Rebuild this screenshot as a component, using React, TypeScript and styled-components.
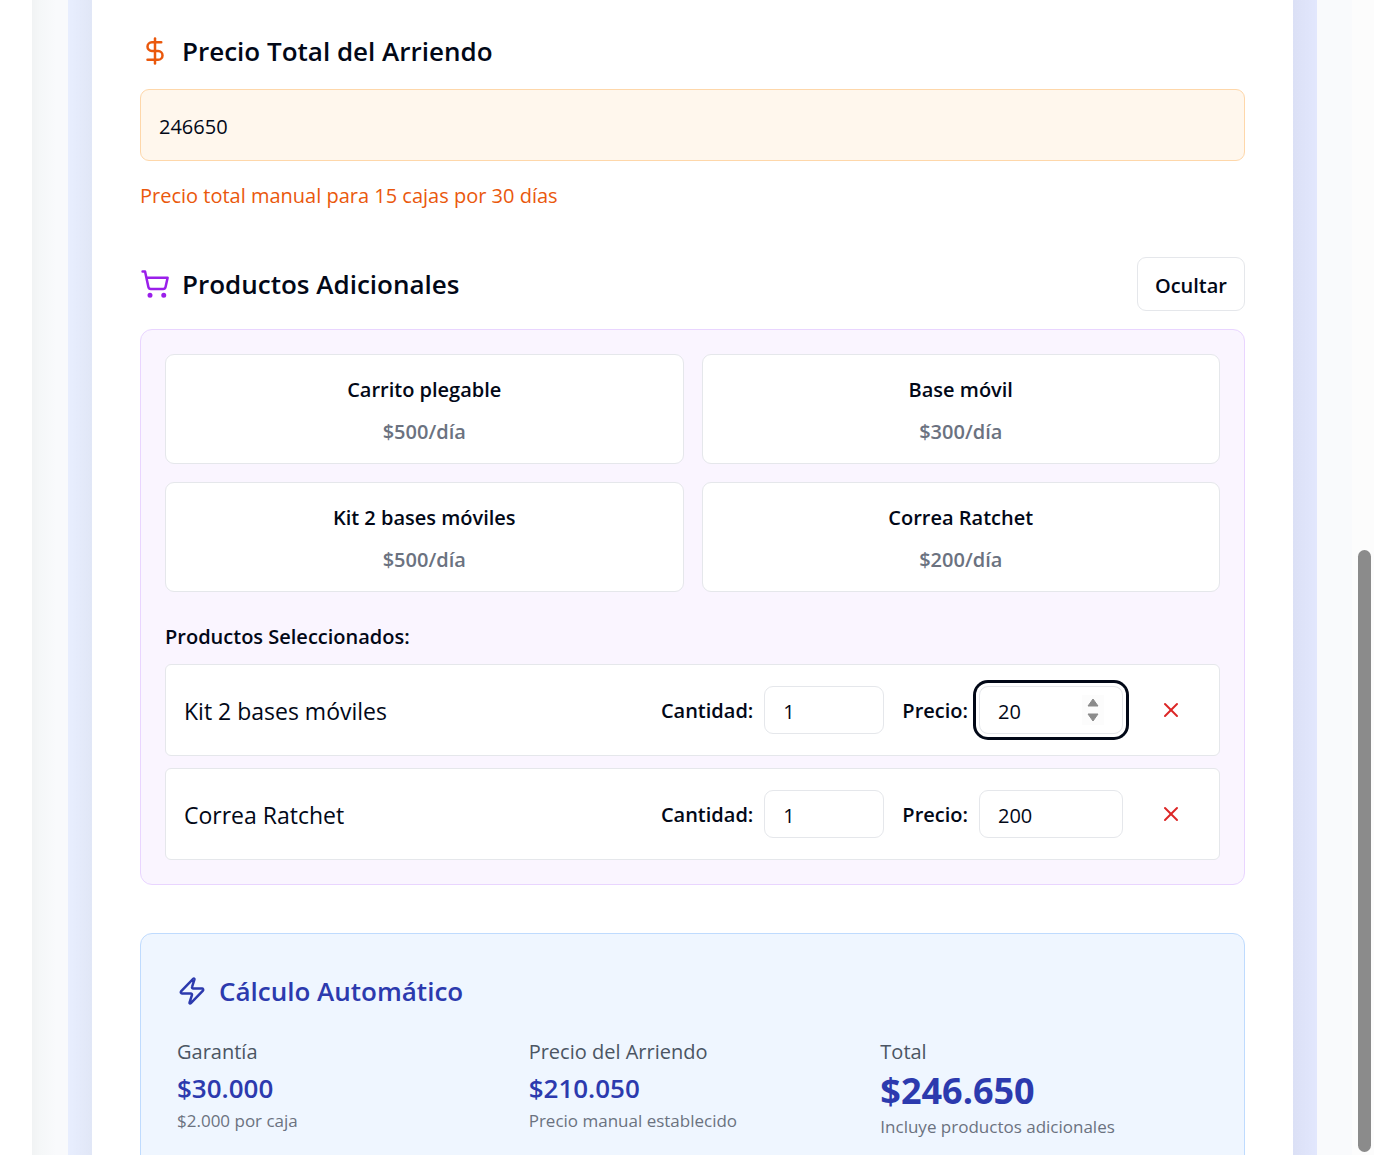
import React, { useState } from "react";
import styled, { createGlobalStyle } from "styled-components";
import { DollarSign, ShoppingCart, X, Zap } from "lucide-react";

const GlobalStyle = createGlobalStyle`
  *, *::before, *::after { box-sizing: border-box; }
  body {
    margin: 0;
    background: #ffffff;
    color: #020817;
    font-family: "Segoe UI", "Open Sans", "Noto Sans", sans-serif;
    font-size: 23px;
    line-height: 36px;
  }
  button, input { font: inherit; color: inherit; }
  h2, h3, p { margin: 0; }
`;

const Shell = styled.div`
  display: flex;
  height: 100vh;
  overflow: hidden;
`;

const Sidebar = styled.aside`
  flex: 0 0 32px;
  background: #ffffff;
`;

const Main = styled.main`
  flex: 1;
  min-width: 0;
  padding: 0 35px 0 36px;
  background: linear-gradient(to right, #f1f3f4 0, #f5f7f8 8px, #f9fafc 24px, #f9fafc 100%);
`;

const Backdrop = styled.div`
  min-height: 100%;
  padding: 0 24px;
  background:
    linear-gradient(to right, rgba(0, 0, 0, 0) 0, rgba(0, 0, 0, 0.03) 24px, rgba(0, 0, 0, 0.03) calc(100% - 24px), rgba(0, 0, 0, 0) 100%),
    linear-gradient(to right, #e8eefe, #e2e7fd);
`;

const Card = styled.div`
  display: flex;
  flex-direction: column;
  gap: 44px;
  padding: 30px 48px 48px;
  background: #ffffff;
`;

const Section = styled.section`
  display: flex;
  flex-direction: column;
`;

const HeaderRow = styled.div`
  display: flex;
  align-items: center;
  justify-content: space-between;
  margin-bottom: 18px;
`;

const Heading = styled.h2<{ $icon: string; $color?: string }>`
  display: flex;
  align-items: center;
  gap: 12px;
  font-size: 26px;
  line-height: 42px;
  font-weight: 600;
  color: ${(p) => p.$color ?? "#020817"};

  svg { flex: none; color: ${(p) => p.$icon}; }
`;

const PriceInput = styled.input`
  width: 100%;
  height: 72px;
  margin: 17px 0 18px;
  padding: 2px 18px 0;
  border: 1px solid #fed7aa;
  border-radius: 9px;
  background: #fff7ed;
  font-size: 20px;
`;

const Hint = styled.p`
  font-size: 20px;
  line-height: 34px;
  color: #ea580c;
`;

const OutlineButton = styled.button`
  height: 54px;
  padding: 3px 17px 0;
  border: 1px solid #e5e7eb;
  border-radius: 9px;
  background: #ffffff;
  font-size: 20px;
  font-weight: 600;
`;

const Panel = styled.div`
  padding: 24px;
  border: 1px solid #e9d5ff;
  border-radius: 12px;
  background: #faf5ff;
`;

const ProductGrid = styled.div`
  display: grid;
  grid-template-columns: 1fr 1fr;
  gap: 18px;
`;

const ProductButton = styled.button`
  display: flex;
  flex-direction: column;
  align-items: center;
  justify-content: center;
  gap: 12px;
  height: 110px;
  padding: 3px 18px 0;
  border: 1px solid #e5e7eb;
  border-radius: 9px;
  background: #ffffff;
  font-size: 20px;
  line-height: 30px;
  font-weight: 600;
`;

const Rate = styled.span`
  color: #6b7280;
`;

const Subheading = styled.h3`
  margin: 30px 0 12px;
  font-size: 20px;
  line-height: 30px;
  font-weight: 600;
`;

const Lines = styled.div`
  display: flex;
  flex-direction: column;
  gap: 12px;
`;

const Line = styled.div`
  display: flex;
  align-items: center;
  gap: 18px;
  height: 92px;
  padding: 0 18px;
  border: 1px solid #e5e7eb;
  border-radius: 6px;
  background: #ffffff;
`;

const LineName = styled.span`
  flex: 1;
  padding-top: 2px;
`;

const Field = styled.div`
  display: flex;
  align-items: center;
  gap: 11px;
`;

const FieldLabel = styled.label`
  padding-top: 2px;
  font-size: 20px;
  font-weight: 600;
`;

const NumberBox = styled.div<{ $width: number; $active?: boolean }>`
  display: flex;
  align-items: center;
  width: ${(p) => p.$width}px;
  height: 48px;
  padding: 0 18px;
  border: 1px solid #e5e7eb;
  border-radius: 9px;
  background: #ffffff;
  box-shadow: ${(p) => (p.$active ? "0 0 0 3px #ffffff, 0 0 0 6px #020817" : "none")};
`;

const NumberInput = styled.input`
  flex: 1;
  min-width: 0;
  height: 100%;
  padding: 2px 0 0;
  border: 0;
  outline: 0;
  background: transparent;
  font-size: 20px;
  appearance: textfield;

  &::-webkit-inner-spin-button, &::-webkit-outer-spin-button { appearance: none; margin: 0; }
`;

const Spinner = styled.div`
  display: flex;
  flex-direction: column;
  align-items: center;
  width: 22px;
  background: #fcfcfc;
`;

const Step = styled.button`
  display: flex;
  align-items: center;
  justify-content: center;
  width: 22px;
  height: 15px;
  padding: 0;
  border: 0;
  background: transparent;
`;

const RemoveButton = styled.button`
  display: flex;
  align-items: center;
  justify-content: center;
  width: 60px;
  height: 54px;
  padding: 0;
  border: 0;
  background: transparent;
  color: #dc2626;
`;

const Summary = styled.section`
  margin-top: 4px;
  padding: 36px;
  border: 1px solid #bfdbfe;
  border-radius: 12px;
  background: #eff6ff;
`;

const Totals = styled.div`
  display: grid;
  grid-template-columns: repeat(3, 1fr);
  gap: 24px;
  margin-top: 25px;
`;

const Muted = styled.p`
  font-size: 20px;
  line-height: 30px;
  color: #4b5563;
`;

const Amount = styled.p<{ $large?: boolean }>`
  font-size: ${(p) => (p.$large ? 36 : 26)}px;
  line-height: ${(p) => (p.$large ? 48 : 42)}px;
  font-weight: ${(p) => (p.$large ? 700 : 600)};
  color: #2c3aae;
`;

const Note = styled.p`
  font-size: 17px;
  line-height: 24px;
  color: #6b7280;
`;

const Scrollbar = styled.div`
  display: flex;
  flex: 0 0 22px;
  flex-direction: column;
  align-items: center;
  padding: 0 3px 3px 6px;
  background: #fcfcfc;

  &::before { content: ""; flex: 550; }
`;

const Thumb = styled.div`
  flex: 602;
  width: 13px;
  border-radius: 7px;
  background: #8b8b8b;
`;

const products = [
  { name: "Carrito plegable", rate: 500 },
  { name: "Base móvil", rate: 300 },
  { name: "Kit 2 bases móviles", rate: 500 },
  { name: "Correa Ratchet", rate: 200 },
];

const totals = [
  { label: "Garantía", amount: "$30.000", note: "$2.000 por caja" },
  { label: "Precio del Arriendo", amount: "$210.050", note: "Precio manual establecido" },
  { label: "Total", amount: "$246.650", note: "Incluye productos adicionales", large: true },
];

type LineProps = { id: string; name: string; initialPrice: number; active?: boolean };

function SelectedLine({ id, name, initialPrice, active }: LineProps) {
  const [quantity, setQuantity] = useState("1");
  const [price, setPrice] = useState(String(initialPrice));
  const step = (by: number) => setPrice(String(Number(price) + by));

  return (
    <Line>
      <LineName>{name}</LineName>
      <Field>
        <FieldLabel htmlFor={`${id}-qty`}>Cantidad:</FieldLabel>
        <NumberBox $width={120}>
          <NumberInput id={`${id}-qty`} type="number" value={quantity} onChange={(e) => setQuantity(e.target.value)} />
        </NumberBox>
      </Field>
      <Field>
        <FieldLabel htmlFor={`${id}-price`}>Precio:</FieldLabel>
        <NumberBox $width={144} $active={active}>
          <NumberInput id={`${id}-price`} type="number" value={price} onChange={(e) => setPrice(e.target.value)} />
          {active && (
            <Spinner>
              <Step aria-label="Aumentar" onClick={() => step(1)}>
                <svg width="12" height="9" viewBox="0 0 12 9"><path d="M6 1 11 8H1Z" fill="#8b8b8b" stroke="#8b8b8b" strokeLinejoin="round" /></svg>
              </Step>
              <Step aria-label="Disminuir" onClick={() => step(-1)}>
                <svg width="12" height="9" viewBox="0 0 12 9"><path d="M6 8 1 1H11Z" fill="#8b8b8b" stroke="#8b8b8b" strokeLinejoin="round" /></svg>
              </Step>
            </Spinner>
          )}
        </NumberBox>
      </Field>
      <RemoveButton aria-label={`Quitar ${name}`}><X size={24} /></RemoveButton>
    </Line>
  );
}

export default function App() {
  const [total, setTotal] = useState("246650");

  return (
    <>
      <GlobalStyle />
      <Shell>
        <Sidebar />
        <Main>
          <Backdrop>
            <Card>
              <Section>
                <Heading as="label" htmlFor="total" $icon="#ea580c">
                  <DollarSign size={30} />
                  Precio Total del Arriendo
                </Heading>
                <PriceInput id="total" value={total} onChange={(e) => setTotal(e.target.value)} />
                <Hint>Precio total manual para 15 cajas por 30 días</Hint>
              </Section>

              <Section>
                <HeaderRow>
                  <Heading $icon="#9a1fea">
                    <ShoppingCart size={30} />
                    Productos Adicionales
                  </Heading>
                  <OutlineButton>Ocultar</OutlineButton>
                </HeaderRow>
                <Panel>
                  <ProductGrid>
                    {products.map((p) => (
                      <ProductButton key={p.name}>
                        <span>{p.name}</span>
                        <Rate>{`$${p.rate}/día`}</Rate>
                      </ProductButton>
                    ))}
                  </ProductGrid>
                  <Subheading>Productos Seleccionados:</Subheading>
                  <Lines>
                    <SelectedLine id="kit" name="Kit 2 bases móviles" initialPrice={20} active />
                    <SelectedLine id="correa" name="Correa Ratchet" initialPrice={200} />
                  </Lines>
                </Panel>
              </Section>

              <Summary>
                <Heading $icon="#2c3aae" $color="#2c3aae">
                  <Zap size={30} />
                  Cálculo Automático
                </Heading>
                <Totals>
                  {totals.map((t) => (
                    <div key={t.label}>
                      <Muted>{t.label}</Muted>
                      <Amount $large={t.large}>{t.amount}</Amount>
                      <Note>{t.note}</Note>
                    </div>
                  ))}
                </Totals>
              </Summary>
            </Card>
          </Backdrop>
        </Main>
        <Scrollbar><Thumb /></Scrollbar>
      </Shell>
    </>
  );
}
